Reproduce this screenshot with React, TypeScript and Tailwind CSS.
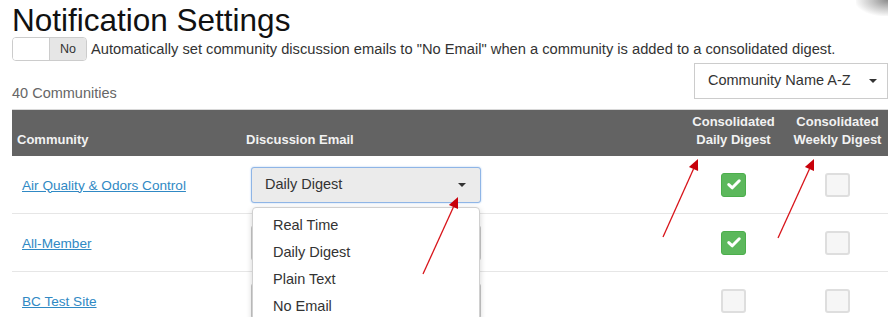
import React from 'react';

const rows = [
  { name: 'Air Quality & Odors Control', daily: true, weekly: false },
  { name: 'All-Member', daily: true, weekly: false },
  { name: 'BC Test Site', daily: false, weekly: false },
];

const options = ['Real Time', 'Daily Digest', 'Plain Text', 'No Email'];

const Caret = () => (
  <span className="w-0 h-0 border-l-[4px] border-r-[4px] border-t-[4px] border-l-transparent border-r-transparent border-t-[#333]" />
);

const Checkbox: React.FC<{ checked: boolean }> = ({ checked }) =>
  checked ? (
    <span className="flex items-center justify-center w-[25px] h-[24px] rounded-[3px] bg-[#5cb85c] border border-[#4cae4c]">
      <svg width="14" height="11" viewBox="0 0 14 11">
        <polyline points="1.8,5.6 5.3,8.8 12.2,1.8" fill="none" stroke="#fff" strokeWidth="3" strokeLinecap="round" strokeLinejoin="round" />
      </svg>
    </span>
  ) : (
    <span className="block w-[25px] h-[24px] rounded-[3px] bg-[#f6f6f6] border-2 border-[#dedede]" />
  );

// red annotation arrow, tail -> tip
const Arrow: React.FC<{ x1: number; y1: number; x2: number; y2: number }> = ({ x1, y1, x2, y2 }) => {
  const dx = x2 - x1;
  const dy = y2 - y1;
  const len = Math.hypot(dx, dy);
  const ux = dx / len;
  const uy = dy / len;
  const bx = x2 - ux * 11;
  const by = y2 - uy * 11;
  const px = -uy * 5;
  const py = ux * 5;
  return (
    <g>
      <line x1={x1} y1={y1} x2={bx} y2={by} stroke="#d8141a" strokeWidth="1.3" />
      <polygon points={`${x2},${y2} ${bx + px},${by + py} ${bx - px},${by - py}`} fill="#c8000a" />
    </g>
  );
};

const App: React.FC = () => {
  return (
    <div className="relative w-[888px] h-[317px] overflow-hidden bg-white text-[#333] font-['Liberation_Sans',Arial,sans-serif]">
      {/* corner shadow */}
      <div className="absolute top-0 right-0 w-[32px] h-[16px] bg-[radial-gradient(ellipse_at_top_right,#8c8c8c_0%,#c4c4c4_35%,transparent_75%)]" />

      <div className="pl-3">
        <h1 className="mt-[5px] text-[31.5px] leading-[31px] text-[#111] font-normal">Notification Settings</h1>

        <div className="flex items-center h-[24px] mt-[1px]">
          <div className="flex w-[75px] h-[24px] rounded-[4px] border border-[#ccc] overflow-hidden">
            <span className="w-[36px] bg-white" />
            <span className="flex-1 flex items-center justify-center bg-[#e6e6e6] border-l border-[#ccc] text-[12.5px] text-[#333]">No</span>
          </div>
          <span className="ml-[4px] text-[14.7px] text-[#333]">
            Automatically set community discussion emails to "No Email" when a community is added to a consolidated digest.
          </span>
        </div>

        <div className="flex justify-between items-start h-[36px] mt-[2px]">
          <span className="mt-[20px] leading-5 text-[14.5px] text-[#666]">40 Communities</span>
          <div className="flex items-center justify-between w-[194px] h-[36px] border border-[#ccc] pl-[13px] pr-[10px] text-[14.5px] text-[#333]">
            <span>Community Name A-Z</span>
            <Caret />
          </div>
        </div>

        <div className="mt-[10px] border-t border-[#d8d8d8]">
          <div className="flex h-[46px] bg-[#636363] text-[13px] font-bold text-[#f2f2f2] leading-[18px] items-end pb-[7px]">
            <div className="w-[229px] pl-[5px]">Community</div>
            <div className="flex-1 pl-[5px]">Discussion Email</div>
            <div className="w-[107px] text-center">Consolidated<br />Daily Digest</div>
            <div className="w-[101px] text-center">Consolidated<br />Weekly Digest</div>
          </div>

          {rows.map((row, i) => (
            <div key={row.name} className="flex items-center h-[58px] border-b border-[#e6e6e6]">
              <div className="w-[229px] pl-[10px]">
                <a href="#" className="text-[13.6px] text-[#3089c4] underline">{row.name}</a>
              </div>
              <div className="flex-1 pl-[10px]">
                <div className="relative w-[230px]">
                  {i === 0 ? (
                    <div className="flex items-center justify-between h-[36px] pl-[13px] pr-[14px] rounded-[3px] border bg-[#ebebeb] border-[#8fb5e6] shadow-[0_0_2px_#a8c8f0] text-[14.5px] text-[#333]">
                      <span>Daily Digest</span>
                      <Caret />
                    </div>
                  ) : (
                    // covered by the open menu, only its edges show
                    <div className="h-[36px] rounded-[3px] border bg-[#f0f0f0] border-[#c8c8c8]" />
                  )}
                  {i === 0 && (
                    <div className="absolute z-10 left-[1px] top-[40px] w-[228px] h-[140px] bg-white border border-[#d0d0d0] rounded-[4px] shadow-[0_2px_6px_rgba(0,0,0,0.18)] pt-[5px]">
                      {options.map((o) => (
                        <div key={o} className="h-[27px] flex items-center pl-[20px] text-[14.5px] text-[#333]">
                          {o}
                        </div>
                      ))}
                    </div>
                  )}
                </div>
              </div>
              <div className="w-[107px] flex justify-center">
                <Checkbox checked={row.daily} />
              </div>
              <div className="w-[101px] flex justify-center">
                <Checkbox checked={row.weekly} />
              </div>
            </div>
          ))}
        </div>
      </div>

      {/* annotation arrows */}
      <svg className="absolute inset-0 z-20 pointer-events-none" width="888" height="317">
        <Arrow x1={423} y1={274} x2={458} y2={197} />
        <Arrow x1={663} y1={237} x2={698} y2={159} />
        <Arrow x1={778} y1={238} x2={814} y2={159} />
      </svg>
    </div>
  );
};

export default App;
